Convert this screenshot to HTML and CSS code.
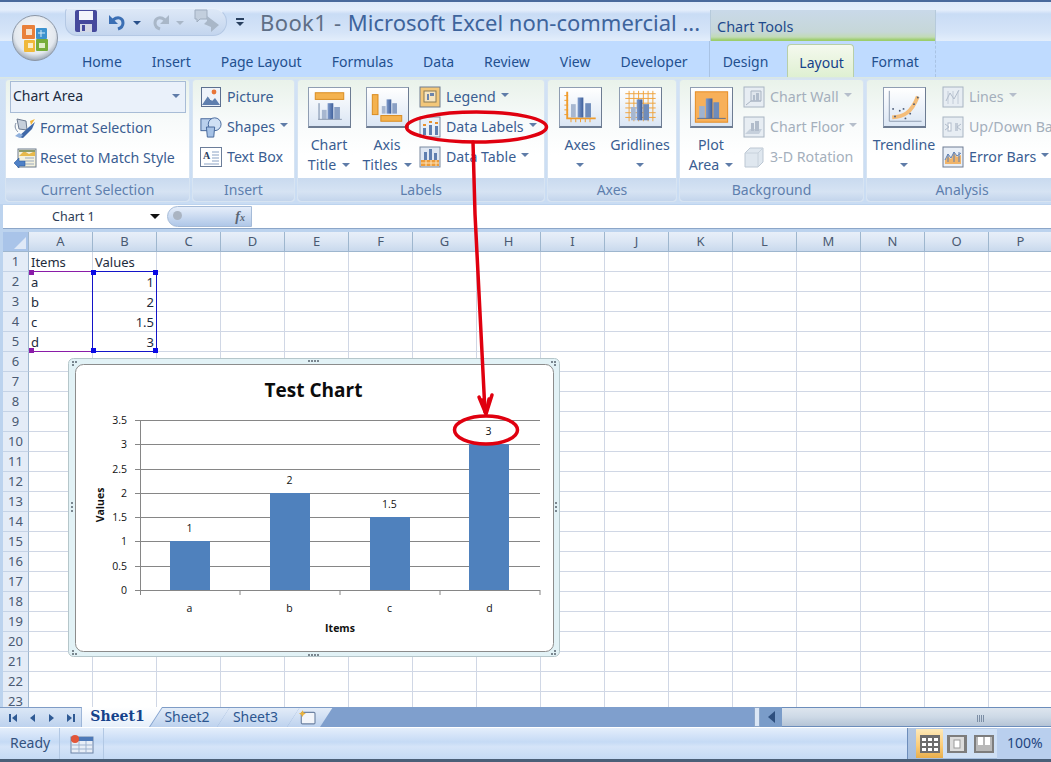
FILE: index.html
```html
<!DOCTYPE html>
<html lang="en">
<head>
<meta charset="utf-8">
<title>Book1 - Microsoft Excel</title>
<link rel="stylesheet" href="styles.css">
</head>
<body>
<svg class="defs" width="0" height="0">
  <defs>
    <linearGradient id="barb" x1="0" x2="1" y1="0" y2="0"><stop offset="0" stop-color="#7f9bcb"/><stop offset="1" stop-color="#3e5f9b"/></linearGradient>
    <symbol id="i-picture" viewBox="0 0 22 22"><rect x="1.5" y="1.5" width="19" height="19" fill="#eef3fa" stroke="#5c6f8f"/><circle cx="14" cy="6" r="2.4" fill="#e8763a"/><path d="M2 19l6-9 4 5 3-3 5 7z" fill="#5f7fae"/><path d="M8 10l3 4" stroke="#fff"/></symbol>
    <symbol id="i-shapes" viewBox="0 0 24 24"><rect x="1" y="3" width="13" height="13" fill="#b9cfec" stroke="#3f6196"/><circle cx="16" cy="9" r="7" fill="#cfe0f5" stroke="#3f6196"/><path d="M7 12h9l-1 11H8z" fill="#a6c2e6" stroke="#3f6196"/></symbol>
    <symbol id="i-textbox" viewBox="0 0 22 22"><rect x="0.5" y="1.5" width="21" height="19" fill="#fff" stroke="#6b7d99"/><path d="M12 6h7M12 9h7M12 12h7M12 15h7M4 18h15" stroke="#8ba2c4"/><text x="3" y="13" class="ic-text">A</text></symbol>
    <symbol id="i-format" viewBox="0 0 24 24"><path d="M4 3l9 2 1 9-8-1z" fill="#c6cfdb" stroke="#6c7a90"/><path d="M3 7c-2 4 0 7 2 9" stroke="#7a8aa2" fill="none"/><path d="M5 21l11-10 6-5-3 7-9 9z" fill="#3f68a8"/><path d="M17 5l5-2-4 6z" fill="#f0b53a"/><path d="M2 20l5 2 3-3-4-2z" fill="#8fb0dc"/></symbol>
    <symbol id="i-reset" viewBox="0 0 24 24"><rect x="5" y="3" width="18" height="18" fill="#f4f1dc" stroke="#6b7a8e"/><path d="M6 10l5-5 5 3 6-3v5z" fill="#e7b94a"/><path d="M6 4h16v2H6z" fill="#8a9a6a"/><path d="M12 12h9M12 15h9M12 18h9" stroke="#99a9c0"/><path d="M1 17l5-5v3h6v5H6v2z" fill="#4f81c7" stroke="#2c5a9a" stroke-width=".6"/></symbol>
    <symbol id="i-legend" viewBox="0 0 22 22"><rect x="1" y="1" width="20" height="20" fill="#f3c779" stroke="#6f7c8f"/><rect x="5" y="5" width="12" height="11" fill="#f7e5bf" stroke="#8a7a55"/><rect x="8" y="8" width="2" height="6" fill="#6c85ad"/><rect x="11" y="7" width="4" height="3" fill="#6c85ad"/></symbol>
    <symbol id="i-dlabels" viewBox="0 0 22 22"><rect x="1" y="1" width="20" height="20" fill="#e9eff7" stroke="#7b8aa0"/><rect x="4" y="12" width="3" height="7" fill="#5f7fb0"/><rect x="10" y="9" width="3" height="10" fill="#5f7fb0"/><rect x="16" y="10" width="3" height="9" fill="#5f7fb0"/><path d="M4 9h3M10 6h3M16 7h3" stroke="#e8912e" stroke-width="2"/></symbol>
    <symbol id="i-dtable" viewBox="0 0 22 22"><rect x="1" y="1" width="20" height="20" fill="#dfe7f2" stroke="#7b8aa0"/><rect x="5" y="6" width="3" height="8" fill="#5f7fb0"/><rect x="10" y="3" width="3" height="11" fill="#5f7fb0"/><rect x="15" y="7" width="3" height="7" fill="#5f7fb0"/><rect x="2" y="14" width="18" height="6" fill="#ed9c3a"/><path d="M2 17h18M7 14v6M12 14v6M17 14v6" stroke="#fbe3bd"/></symbol>
    <symbol id="i-wall" viewBox="0 0 22 22"><rect x="1" y="1" width="20" height="20" fill="#e7edf3" stroke="#a8b4c2"/><path d="M8 5h10v10H8z" fill="#dfe5ec" stroke="#aab5c3"/><path d="M3 19l5-4h10" stroke="#aab5c3" fill="none"/><rect x="10" y="9" width="2" height="6" fill="#b1bccb"/><rect x="13" y="7" width="3" height="8" fill="#b1bccb"/></symbol>
    <symbol id="i-floor" viewBox="0 0 22 22"><rect x="1" y="1" width="20" height="20" fill="#e7edf3" stroke="#a8b4c2"/><path d="M2 18l5-5h12l-3 5z" fill="#c6d0dc"/><rect x="8" y="7" width="3" height="8" fill="#b1bccb"/><rect x="12" y="5" width="4" height="10" fill="#b1bccb"/></symbol>
    <symbol id="i-rot" viewBox="0 0 22 22"><path d="M2 7l5-5h13v14l-5 5H2z" fill="#dfe7ef" stroke="#bcc7d3"/><path d="M2 7h13v14M15 7l5-5" fill="none" stroke="#c8d2dc"/></symbol>
    <symbol id="i-lines" viewBox="0 0 22 22"><rect x="1" y="1" width="20" height="20" fill="#e7edf3" stroke="#a8b4c2"/><path d="M6 5v13M11 5v13M16 5v13" stroke="#c3ccd8"/><path d="M4 15l4-8 4 6 5-9" stroke="#b1bccb" fill="none"/></symbol>
    <symbol id="i-updown" viewBox="0 0 22 22"><rect x="1" y="1" width="20" height="20" fill="#e7edf3" stroke="#a8b4c2"/><rect x="6" y="7" width="3" height="8" fill="#fff" stroke="#b1bccb"/><rect x="13" y="7" width="3" height="8" fill="#c3ccd8"/><path d="M3 8l4 3-4 3M19 8l-4 3 4 3" stroke="#b1bccb" fill="none"/></symbol>
    <symbol id="i-error" viewBox="0 0 22 22"><rect x="1" y="1" width="20" height="20" fill="#e9eff7" stroke="#6e7d93"/><path d="M3 18V14l3-4 3 3 3-6 3 4 4-2v9z" fill="#f0b46a"/><path d="M3 14l3-6 3 4 3-6 3 4 4-3" stroke="#5f7fb0" fill="none"/><path d="M6 8v8M12 6v10M17 6v10" stroke="#5f7fb0"/></symbol>
    <symbol id="big-title" viewBox="0 0 42 40"><rect x="6" y="5" width="30" height="7" fill="#f4b24e" stroke="#d98a1c"/><rect x="9" y="16" width="2" height="17" fill="#aab8cc"/><rect x="13" y="23" width="5" height="10" fill="#a7b7d0"/><rect x="19" y="16" width="6" height="17" fill="url(#barb)"/><rect x="26" y="20" width="6" height="13" fill="#8aa0c4"/><path d="M9 33h25" stroke="#8a98ad"/></symbol>
    <symbol id="big-axis" viewBox="0 0 42 40"><rect x="5" y="7" width="6" height="21" fill="#f4b24e" stroke="#d98a1c"/><rect x="15" y="19" width="4" height="8" fill="#a7b7d0"/><rect x="20" y="12" width="5" height="15" fill="url(#barb)"/><rect x="26" y="16" width="5" height="11" fill="#8aa0c4"/><rect x="14" y="29" width="22" height="6" fill="#f4b24e" stroke="#d98a1c"/></symbol>
    <symbol id="big-axes" viewBox="0 0 42 40"><path d="M7 4v28h30" stroke="#ef9c2c" stroke-width="2" fill="none"/><path d="M4 8h4M4 13h4M4 18h4M4 23h4M4 28h4M11 32v4M16 32v4M21 32v4M26 32v4M31 32v4" stroke="#ef9c2c"/><rect x="11" y="17" width="5" height="14" fill="#a7b7d0"/><rect x="18" y="10" width="6" height="21" fill="url(#barb)"/><rect x="26" y="16" width="6" height="15" fill="#6f8cbb"/></symbol>
    <symbol id="big-grid" viewBox="0 0 42 40"><path d="M5 6h32M5 11h32M5 16h32M5 21h32M5 26h32M5 31h32M9 3v32M14 3v32M19 3v32M24 3v32M29 3v32M34 3v32" stroke="#efa23c"/><rect x="11" y="20" width="5" height="14" fill="#a7b7d0"/><rect x="17" y="12" width="6" height="22" fill="url(#barb)"/><rect x="24" y="17" width="6" height="17" fill="#6f8cbb"/></symbol>
    <symbol id="big-plot" viewBox="0 0 42 40"><rect x="4" y="4" width="34" height="32" fill="#f7b05a" stroke="#e58a1f"/><rect x="8" y="19" width="6" height="13" fill="#9fb2cf"/><rect x="15" y="11" width="7" height="21" fill="url(#barb)"/><rect x="23" y="15" width="6" height="17" fill="#6f8cbb"/><path d="M6 32h30" stroke="#5c6f8f"/></symbol>
    <symbol id="big-trend" viewBox="0 0 42 40"><path d="M5 3v32h34" stroke="#8a98ad" fill="none"/><path d="M8 31c12-1 20-4 27-22" stroke="#f4bd7a" stroke-width="4" fill="none"/><g fill="#4d5c78"><circle cx="9" cy="22" r="1"/><circle cx="11" cy="30" r="1"/><circle cx="16" cy="24" r="1"/><circle cx="20" cy="22" r="1"/><circle cx="22" cy="32" r="1"/><circle cx="27" cy="27" r="1"/><circle cx="31" cy="17" r="1"/><circle cx="35" cy="10" r="1"/></g></symbol>
  </defs>
</svg>

<div class="window">
  <header class="titlebar">
    <div class="qat">
      <svg class="q-save" viewBox="0 0 22 22"><rect width="22" height="22" rx="2" fill="#45499c"/><rect x="4" y="1" width="14" height="9" fill="#f2f4fb"/><rect x="5" y="14" width="12" height="8" fill="#d3d8e6"/><rect x="7" y="15" width="3" height="6" fill="#45499c"/></svg>
      <svg class="q-undo" viewBox="0 0 18 18"><path d="M5 7c5-4 10-2 10 3 0 3-2 5-5 6" fill="none" stroke="#3b6fb4" stroke-width="3"/><path d="M1 2v9h9z" fill="#3b6fb4"/></svg>
      <span class="q-caret"></span>
      <svg class="q-undo q-redo" viewBox="0 0 18 18"><path d="M13 7C8 3 3 5 3 10c0 3 2 5 5 6" fill="none" stroke="#a9b7c8" stroke-width="3"/><path d="M17 2v9H8z" fill="#a9b7c8"/></svg>
      <span class="q-caret q-caret-off"></span>
      <svg class="q-repeat" viewBox="0 0 26 24"><path d="M1 1h12v9H6l-3 3v-3H1z" fill="#c3cfde" stroke="#9fadbf"/><path d="M13 7l12 9-8 7v-5l-7-3 3-3z" fill="#a9b7c8"/></svg>
    </div>
    <div class="customize"><span class="cust-line"></span><span class="q-caret q-caret-dark"></span></div>
    <div class="doc-title"><span class="doc-name">Book1</span><span class="doc-sep"> - </span>Microsoft Excel non-commercial ...</div>
    <div class="context">Chart Tools</div>
  </header>

  <div class="orb" aria-label="Office button">
    <svg viewBox="0 0 46 46" width="46" height="46">
      <defs><radialGradient id="orbg" cx=".5" cy=".4" r=".6"><stop offset="0" stop-color="#fdfdfd"/><stop offset=".75" stop-color="#e3e8ee"/><stop offset="1" stop-color="#9aa6b4"/></radialGradient></defs>
      <circle cx="23" cy="23" r="22.5" fill="url(#orbg)" stroke="#8b96a5"/>
      <rect x="10" y="10" width="13" height="14" rx="1" fill="#e9803a"/><rect x="14" y="14" width="6" height="6" fill="#f6e2cd"/>
      <rect x="24" y="13" width="11" height="11" rx="1" fill="#3d93cf"/><path d="M26 18h7M29 15v7" stroke="#d7ecf8"/>
      <rect x="24" y="24" width="12" height="12" rx="1" fill="#77ad3a"/><rect x="27" y="28" width="6" height="5" fill="#e0edc9"/>
      <rect x="12" y="25" width="11" height="12" rx="1" fill="#f0b93a"/><rect x="16" y="28" width="5" height="5" fill="#fbeec7"/>
    </svg>
  </div>

  <nav class="tabs">
    <span class="tab">Home</span><span class="tab">Insert</span><span class="tab">Page Layout</span><span class="tab">Formulas</span><span class="tab">Data</span><span class="tab">Review</span><span class="tab">View</span><span class="tab">Developer</span>
    <span class="tab tab-design">Design</span><span class="tab tab-active">Layout</span><span class="tab tab-format">Format</span>
  </nav>

  <section class="ribbon">
    <div class="group g-current">
      <div class="tools tools-col">
        <div class="combo"><span>Chart Area</span><span class="caret"></span></div>
        <div class="small"><svg class="ic24"><use href="#i-format"/></svg>Format Selection</div>
        <div class="small"><svg class="ic24"><use href="#i-reset"/></svg>Reset to Match Style</div>
      </div>
      <div class="glabel">Current Selection</div>
    </div>
    <div class="group g-insert">
      <div class="tools tools-col">
        <div class="small"><svg class="ic22"><use href="#i-picture"/></svg>Picture</div>
        <div class="small"><svg class="ic22"><use href="#i-shapes"/></svg>Shapes<span class="caret"></span></div>
        <div class="small"><svg class="ic22"><use href="#i-textbox"/></svg>Text Box</div>
      </div>
      <div class="glabel">Insert</div>
    </div>
    <div class="group g-labels">
      <div class="tools">
        <div class="big"><div class="bigbox"><svg><use href="#big-title"/></svg></div><div class="biglabel">Chart<br>Title<span class="caret"></span></div></div>
        <div class="big"><div class="bigbox"><svg><use href="#big-axis"/></svg></div><div class="biglabel">Axis<br>Titles<span class="caret"></span></div></div>
        <div class="smalls">
          <div class="small"><svg class="ic22"><use href="#i-legend"/></svg>Legend<span class="caret"></span></div>
          <div class="small"><svg class="ic22"><use href="#i-dlabels"/></svg>Data Labels<span class="caret"></span></div>
          <div class="small"><svg class="ic22"><use href="#i-dtable"/></svg>Data Table<span class="caret"></span></div>
        </div>
      </div>
      <div class="glabel">Labels</div>
    </div>
    <div class="group g-axes">
      <div class="tools">
        <div class="big big-60"><div class="bigbox"><svg><use href="#big-axes"/></svg></div><div class="biglabel">Axes<br><span class="caret caret-solo"></span></div></div>
        <div class="big big-60"><div class="bigbox"><svg><use href="#big-grid"/></svg></div><div class="biglabel">Gridlines<br><span class="caret caret-solo"></span></div></div>
      </div>
      <div class="glabel">Axes</div>
    </div>
    <div class="group g-bg">
      <div class="tools">
        <div class="big"><div class="bigbox"><svg><use href="#big-plot"/></svg></div><div class="biglabel">Plot<br>Area<span class="caret"></span></div></div>
        <div class="smalls">
          <div class="small off"><svg class="ic22"><use href="#i-wall"/></svg>Chart Wall<span class="caret"></span></div>
          <div class="small off"><svg class="ic22"><use href="#i-floor"/></svg>Chart Floor<span class="caret"></span></div>
          <div class="small off"><svg class="ic22"><use href="#i-rot"/></svg>3-D Rotation</div>
        </div>
      </div>
      <div class="glabel">Background</div>
    </div>
    <div class="group g-analysis">
      <div class="tools">
        <div class="big big-70"><div class="bigbox"><svg><use href="#big-trend"/></svg></div><div class="biglabel">Trendline<br><span class="caret caret-solo"></span></div></div>
        <div class="smalls">
          <div class="small off"><svg class="ic22"><use href="#i-lines"/></svg>Lines<span class="caret"></span></div>
          <div class="small off"><svg class="ic22"><use href="#i-updown"/></svg>Up/Down Bars<span class="caret"></span></div>
          <div class="small"><svg class="ic22"><use href="#i-error"/></svg>Error Bars<span class="caret"></span></div>
        </div>
      </div>
      <div class="glabel">Analysis</div>
    </div>
  </section>

  <div class="formula">
    <div class="namebox"><span>Chart 1</span><span class="caret-black"></span></div>
    <div class="fx-pill"><span class="fx-dot"></span><span class="fx">f<sub>x</sub></span></div>
    <div class="fx-input"></div>
  </div>

  <main class="sheet">
    <div class="row row-head">
      <div class="corner"><span class="corner-tri"></span></div>
      <div class="ch">A</div><div class="ch">B</div><div class="ch">C</div><div class="ch">D</div><div class="ch">E</div><div class="ch">F</div><div class="ch">G</div><div class="ch">H</div><div class="ch">I</div><div class="ch">J</div><div class="ch">K</div><div class="ch">L</div><div class="ch">M</div><div class="ch">N</div><div class="ch">O</div><div class="ch">P</div>
    </div>
    <div class="row"><div class="rh">1</div><div class="cell">Items</div><div class="cell">Values</div></div>
    <div class="row"><div class="rh">2</div><div class="cell">a</div><div class="cell num">1</div></div>
    <div class="row"><div class="rh">3</div><div class="cell">b</div><div class="cell num">2</div></div>
    <div class="row"><div class="rh">4</div><div class="cell">c</div><div class="cell num">1.5</div></div>
    <div class="row"><div class="rh">5</div><div class="cell">d</div><div class="cell num">3</div></div>
    <div class="row"><div class="rh">6</div></div>
    <div class="row"><div class="rh">7</div></div>
    <div class="row"><div class="rh">8</div></div>
    <div class="row"><div class="rh">9</div></div>
    <div class="row"><div class="rh">10</div></div>
    <div class="row"><div class="rh">11</div></div>
    <div class="row"><div class="rh">12</div></div>
    <div class="row"><div class="rh">13</div></div>
    <div class="row"><div class="rh">14</div></div>
    <div class="row"><div class="rh">15</div></div>
    <div class="row"><div class="rh">16</div></div>
    <div class="row"><div class="rh">17</div></div>
    <div class="row"><div class="rh">18</div></div>
    <div class="row"><div class="rh">19</div></div>
    <div class="row"><div class="rh">20</div></div>
    <div class="row"><div class="rh">21</div></div>
    <div class="row"><div class="rh">22</div></div>
    <div class="row"><div class="rh">23</div></div>
  </main>

  <div class="sheetbar">
    <div class="nav">
      <svg class="navicon" viewBox="0 0 10 10"><path d="M1 1h2v8H1zM9 1v8L4 5z" fill="#2f5a94"/></svg>
      <svg class="navicon" viewBox="0 0 10 10"><path d="M8 1v8L3 5z" fill="#2f5a94"/></svg>
      <svg class="navicon" viewBox="0 0 10 10"><path d="M2 1v8l5-4z" fill="#2f5a94"/></svg>
      <svg class="navicon" viewBox="0 0 10 10"><path d="M9 1H7v8h2zM1 1v8l5-4z" fill="#2f5a94"/></svg>
    </div>
    <div class="stab stab-active">Sheet1</div>
    <div class="stab stab-2">Sheet2</div>
    <div class="stab stab-3">Sheet3</div>
    <div class="stab stab-new"><svg viewBox="0 0 16 14" width="20" height="16"><rect x="3" y="3" width="12" height="10" rx="1" fill="#f2f5fa" stroke="#6e83a3"/><path d="M4 1l1 2 2 1-2 1-1 2-1-2-2-1 2-1z" fill="#e9b23c"/></svg></div>
    <div class="bar-fill"></div>
    <div class="split"></div>
    <div class="sb-left"><span class="sb-tri"></span></div>
    <div class="sb-track"><span class="sb-grip"></span></div>
  </div>

  <footer class="status">
    <div class="ready">Ready</div>
    <div class="macro"><svg viewBox="0 0 24 20" width="24" height="20"><rect x="1" y="3" width="22" height="16" fill="#e8eef7" stroke="#6d83a6"/><rect x="1" y="3" width="22" height="4" fill="#4d79b8"/><path d="M9 7v12M16 7v12M1 11h22M1 15h22" stroke="#9fb3cf"/><circle cx="5" cy="5" r="4" fill="#e2563a"/></svg></div>
    <div class="status-fill"></div>
    <div class="views">
      <div class="view view-on"><svg viewBox="0 0 20 18" width="20" height="18"><rect width="20" height="18" fill="#6c6c6c"/><path d="M2 3h4v3H2zM8 3h4v3H8zM14 3h4v3h-4zM2 8h4v3H2zM8 8h4v3H8zM14 8h4v3h-4zM2 13h4v3H2zM8 13h4v3H8zM14 13h4v3h-4z" fill="#fff"/></svg></div>
      <div class="view"><svg viewBox="0 0 20 18" width="20" height="18"><rect width="20" height="18" fill="#7d7d7d"/><rect x="3" y="2" width="14" height="14" fill="#dcdcdc"/><rect x="7" y="5" width="6" height="8" fill="#fff" stroke="#999"/></svg></div>
      <div class="view"><svg viewBox="0 0 20 18" width="20" height="18"><rect width="20" height="18" fill="#7d7d7d"/><rect x="2" y="2" width="16" height="14" fill="#b9b9b9"/><rect x="4" y="2" width="5" height="8" fill="#fff"/><rect x="11" y="2" width="5" height="8" fill="#fff"/></svg></div>
    </div>
    <div class="zoom">100%</div>
  </footer>
  <div class="edge"></div>

  <div class="ctx-guides"></div>
  <div class="sel sel-a"></div>
  <div class="sel sel-b"></div>
  <span class="hd hd-p hd-1"></span><span class="hd hd-p hd-2"></span>
  <span class="hd hd-b hd-3"></span><span class="hd hd-b hd-4"></span><span class="hd hd-b hd-5"></span><span class="hd hd-b hd-6"></span>

  <svg class="chart" viewBox="68 357 492 301" width="492" height="301">
    <rect x="68.500" y="358.500" width="491" height="298" rx="5" fill="#e2f2f6" stroke="#b5c6ca"/>
    <rect x="75.500" y="364.500" width="478" height="287" rx="8" fill="#fff" stroke="#8c8c8c"/>
    <g fill="#7a8790">
      <path d="M72 361h2v2h-2zM75 361h2v2h-2zM72 364h2v2h-2zM551 361h2v2h-2zM554 361h2v2h-2zM554 364h2v2h-2zM72 650h2v2h-2zM72 653h2v2h-2zM75 653h2v2h-2zM554 650h2v2h-2zM551 653h2v2h-2zM554 653h2v2h-2z"/>
      <path d="M308 360h2v2h-2zM311 360h2v2h-2zM314 360h2v2h-2zM317 360h2v2h-2zM308 654h2v2h-2zM311 654h2v2h-2zM314 654h2v2h-2zM317 654h2v2h-2zM71 502h2v2h-2zM71 506h2v2h-2zM71 510h2v2h-2zM555 502h2v2h-2zM555 506h2v2h-2zM555 510h2v2h-2z"/>
    </g>
    <g stroke="#868686" fill="none">
      <path d="M135 420.500h405M135 444.500h405M135 469.500h405M135 493.500h405M135 517.500h405M135 541.500h405M135 566.500h405M135 590.500h405"/>
      <path d="M140.500 420v175M240 590v5M340 590v5M440 590v5M540 590v5"/>
    </g>
    <g fill="#4f81bd">
      <rect x="170" y="541" width="40" height="49"/>
      <rect x="270" y="493" width="40" height="97"/>
      <rect x="370" y="517" width="40" height="73"/>
      <rect x="469" y="444" width="40" height="146"/>
    </g>
    <text class="c-title" x="313.500" y="397" text-anchor="middle">Test Chart</text>
    <g class="c-text" text-anchor="end">
      <text x="127" y="424">3.5</text><text x="127" y="448">3</text><text x="127" y="473">2.5</text><text x="127" y="497">2</text><text x="127" y="521">1.5</text><text x="127" y="545">1</text><text x="127" y="570">0.5</text><text x="127" y="594">0</text>
    </g>
    <g class="c-text" text-anchor="middle">
      <text x="189.500" y="532">1</text><text x="289.500" y="484">2</text><text x="389.500" y="508">1.5</text><text x="488.500" y="435">3</text>
      <text x="189.500" y="612">a</text><text x="289.500" y="612">b</text><text x="389.500" y="612">c</text><text x="489.500" y="612">d</text>
    </g>
    <text class="c-axis" x="340" y="632" text-anchor="middle">Items</text>
    <text class="c-axis" transform="translate(104 505) rotate(-90)" text-anchor="middle">Values</text>
  </svg>

  <svg class="marks" viewBox="0 0 1051 762" width="1051" height="762">
    <g fill="none" stroke="#e0000f" stroke-width="3.500" stroke-linecap="round" stroke-linejoin="round">
      <ellipse cx="476.500" cy="127" rx="70" ry="15"/>
      <path d="M473 142l2 72 10 198"/>
      <path d="M479 397l7 17 6-19"/>
      <path d="M482 400l4 13 3-14"/>
      <ellipse cx="486" cy="430" rx="31.500" ry="14"/>
    </g>
  </svg>
</div>
</body>
</html>
```

FILE: styles.css
```css
* { box-sizing: border-box; }
html, body { margin: 0; padding: 0; }
body { width: 1051px; height: 762px; overflow: hidden; background: #bcd3ee; font-family: "Noto Sans", "Open Sans", sans-serif; color: #15428b; }
.defs { position: absolute; }
.ic-text { font: bold 10px "Liberation Serif", serif; fill: #2c3e5c; }
.window { position: relative; width: 1051px; height: 762px; display: flex; flex-direction: column; overflow: hidden; }

/* title bar */
.titlebar { height: 41px; flex: none; display: flex; align-items: flex-start; padding-left: 65px; border-top: 2px solid #4a6a9c; background: linear-gradient(#dfeafa 0, #e4eefb 8px, #c9dcf5 12px, #d5e4f8 30px, #e3eefb 39px, #a9c8ee 40px); white-space: nowrap; }
.qat { width: 162px; flex: none; height: 28px; margin-top: 6px; display: flex; align-items: center; padding-left: 9px; border-radius: 4px 14px 14px 12px; background: linear-gradient(#dde8f7, #c3d5ee); border: 1px solid #b4c8e4; border-top-color: #e7effa; }
.q-save { width: 22px; height: 22px; margin-top: -2px; margin-right: 11px; flex: none; }
.q-undo { width: 18px; height: 18px; flex: none; }
.q-redo { margin-left: 4px; }
.q-repeat { width: 26px; height: 24px; margin-left: 4px; margin-top: -3px; flex: none; }
.q-caret { width: 0; height: 0; margin: 2px 7px 0 7px; border: 4px solid transparent; border-top: 4px solid #29508a; border-bottom: 0; flex: none; }
.q-caret-off { border-top-color: #a9b7c8; margin: 2px 6px 0 6px; }
.customize { width: 26px; flex: none; height: 28px; margin-top: 6px; display: flex; flex-direction: column; align-items: center; justify-content: center; gap: 2px; }
.cust-line { width: 8px; height: 2px; background: #29405f; }
.q-caret-dark { margin: 0; border-top-color: #29405f; }
.doc-title { width: 450px; flex: none; margin-left: 7px; height: 39px; line-height: 41px; font-size: 22px; color: #3e649c; overflow: hidden; }
.doc-name { color: #5f6f86; letter-spacing: .4px; }
.doc-sep { color: #5f6f86; padding: 0 1px; }
.context { width: 226px; flex: none; height: 31px; margin-top: 8px; padding: 6px 0 0 6px; line-height: 20px; font-size: 14.500px; color: #1f4a8c; background: linear-gradient(#c9d9e9 0, #c6d7d8 22px, #c2dbb6 27px, #9ccd6b 30px); border-left: 1px solid #b6cadb; border-right: 1px solid #b6cadb; }
.ctx-guides { position: absolute; left: 709px; top: 41px; width: 227px; height: 36px; border-left: 1px solid #a9c3e4; border-right: 1px dashed #a9c3e4; }

/* office orb */
.orb { position: absolute; left: 12px; top: 15px; width: 46px; height: 46px; }

/* tabs */
.tabs { height: 36px; flex: none; display: flex; align-items: flex-end; padding-left: 67px; background: #bfdbff; white-space: nowrap; font-size: 14px; color: #23508f; }
.tab { height: 33px; padding: 8px 15px 0; line-height: 20px; }
.tab-design { margin-left: 5px; }
.tab-active { width: 67px; margin-left: 4px; padding: 8px 0 0 11px; border: 1px solid #b8cfa8; border-bottom: 0; border-radius: 4px 4px 0 0; background: linear-gradient(#f4f9ee, #dff0d2); color: #15428b; }
.tab-format { margin-left: 2px; }

/* ribbon */
.ribbon { height: 127px; flex: none; display: flex; gap: 4px; padding: 3px 0 3px 6px; background: linear-gradient(#dbe8e2 0, #d2e2f5 3px, #c9dcf3 100%); overflow: hidden; }
.group { height: 121px; flex: none; display: flex; flex-direction: column; border-radius: 3px; background: linear-gradient(#e9f2ea 0, #f7fafa 40px, #fff 75px); box-shadow: 0 0 0 1px #d7e4f2; white-space: nowrap; }
.g-current { width: 183px; }
.g-insert { width: 101px; }
.g-labels { width: 246px; }
.g-axes { width: 128px; }
.g-bg { width: 183px; }
.g-analysis { width: 190px; }
.tools { height: 98px; flex: none; display: flex; padding: 2px 0 0 2px; font-size: 14.200px; line-height: 20px; color: #3a5d92; }
.tools-col { flex-direction: column; padding-left: 7px; }
.g-insert .tools-col { padding-left: 5px; }
.glabel { flex: 1; text-align: center; font-size: 14px; line-height: 23px; color: #5e7fae; background: linear-gradient(#c9daef, #d6e3f3 60%, #c3d5ec); border-radius: 0 0 3px 3px; }
.combo { width: 176px; height: 32px; margin: -1px 0 0 -3px; padding: 0 5px 3px 2px; display: flex; justify-content: space-between; align-items: center; background: #eaf1fa; border: 1px solid #a8bcd6; font-size: 14px; color: #1c2b40; flex: none; }
.small { height: 30px; display: flex; align-items: center; gap: 5px; padding-left: 2px; }
.g-current .small { padding-left: 0; gap: 3px; }
.ic22 { width: 22px; height: 22px; flex: none; }
.ic24 { width: 24px; height: 24px; flex: none; }
.off { color: #a4afbc; }
.off .caret { border-top-color: #b5becb; }
.caret { display: inline-block; width: 0; height: 0; margin-left: 6px; margin-bottom: 3px; border: 4px solid transparent; border-top: 4px solid #5f7ca8; border-bottom: 0; vertical-align: middle; }
.small .caret { margin-left: 0; margin-bottom: 4px; }
.combo .caret { margin: 0; }
.caret-solo { margin-left: 0; }
.big { width: 58px; flex: none; display: flex; flex-direction: column; align-items: center; text-align: center; }
.big-60 { width: 60px; }
.big-70 { width: 70px; }
.bigbox { width: 43px; height: 41px; margin-top: 5px; border: 1px solid #8f9db2; border-right-color: #6d7c92; border-bottom: 2px solid #6d7c92; background: linear-gradient(#ffffff, #dbe6f4); }
.bigbox svg { display: block; width: 41px; height: 38px; }
.biglabel { margin-top: 7px; }
.smalls { display: flex; flex-direction: column; margin-left: 1px; }

/* formula bar */
.formula { height: 24px; flex: none; margin-top: 1px; margin-left: 3px; display: flex; background: #fff; border-bottom: 1px solid #8ca6c8; }
.namebox { width: 164px; display: flex; align-items: center; padding: 0 7px 0 49px; justify-content: space-between; font-size: 12.500px; color: #2c3c54; }
.caret-black { width: 0; height: 0; border: 5px solid transparent; border-top: 5px solid #111; border-bottom: 0; }
.fx-pill { position: relative; width: 85px; height: 21px; margin-top: 1px; border: 1px solid #a5bbd8; border-radius: 11px 0 0 11px; background: linear-gradient(#e6eefa, #afc7e8); display: flex; align-items: center; justify-content: flex-end; padding-right: 6px; }
.fx-dot { position: absolute; left: 5px; top: 4px; width: 9px; height: 9px; border-radius: 50%; background: #aab4c2; }
.fx { font: italic bold 14px "Liberation Serif", serif; color: #5b6675; }
.fx sub { font-size: 10px; vertical-align: baseline; }
.fx-input { flex: 1; }

/* sheet */
.sheet { height: 475px; flex: none; margin-top: 3px; margin-left: 3px; background: #fff; overflow: hidden; }
.row { height: 20px; display: flex; background: repeating-linear-gradient(90deg, transparent 0 63px, #d0d7e5 63px 64px) 26px 0 / 100% 100% no-repeat, linear-gradient(transparent 19px, #d0d7e5 19px); font-size: 13px; color: #1d2b3c; }
.row-head { background: none; }
.corner { position: relative; width: 26px; flex: none; background: #a9c4e9; border-right: 1px solid #9eb6ce; border-bottom: 1px solid #9eb6ce; }
.corner-tri { position: absolute; right: 2px; bottom: 2px; width: 0; height: 0; border-left: 12px solid transparent; border-bottom: 12px solid #dfe9f7; }
.ch { width: 64px; flex: none; text-align: center; line-height: 19px; font-size: 13px; color: #4a5a72; background: linear-gradient(#e8eff9, #dbe6f4 50%, #c9d9ed); border-right: 1px solid #9eb6ce; border-bottom: 1px solid #9eb6ce; }
.rh { width: 26px; flex: none; text-align: center; line-height: 19px; font-size: 13px; color: #4a5a72; background: #e4ecf7; border-right: 1px solid #9eb6ce; border-bottom: 1px solid #c5d3e6; }
.cell { width: 64px; flex: none; padding: 0 2px; line-height: 20px; }
.num { text-align: right; }
.cell.num { padding-right: 3px; }

/* sheet tabs */
.sheetbar { height: 20px; flex: none; display: flex; align-items: stretch; background: #7f9fcd; white-space: nowrap; }
.nav { width: 82px; flex: none; padding: 0 5px 0 8px; display: flex; align-items: center; justify-content: space-between; background: linear-gradient(#dbe7f6, #bdd2ee); border-top: 1px solid #7f9cc6; border-right: 1px solid #9db6d8; }
.navicon { width: 10px; height: 10px; }
.stab { flex: none; text-align: center; line-height: 18px; font-size: 14px; color: #2c5690; background: linear-gradient(#e3ecf8, #bdd2ee); border-top: 1px solid #7f9cc6; clip-path: polygon(13px 0, 100% 0, calc(100% - 13px) 100%, 0 100%); }
.stab-active { width: 80px; padding-right: 9px; font: bold 14px/18px "DejaVu Serif", serif; color: #15428b; background: linear-gradient(#fff, #e6effa); border-top: 0; clip-path: polygon(0 0, 100% 0, calc(100% - 13px) 100%, 0 100%); }
.stab-2 { width: 80px; margin-left: -12px; padding-right: 6px; }
.stab-3 { width: 83px; margin-left: -13px; padding-right: 6px; }
.stab-new { width: 46px; margin-left: -13px; padding: 1px 6px 0 0; }
.bar-fill { flex: 1; }
.split { width: 6px; flex: none; background: #dbe7f6; border: 1px solid #8da6c8; }
.sb-left { width: 22px; flex: none; display: flex; align-items: center; justify-content: center; background: #7a9cc9; }
.sb-tri { width: 0; height: 0; border: 6px solid transparent; border-right: 7px solid #2e4f7e; border-left: 0; }
.sb-track { position: relative; width: 269px; flex: none; background: linear-gradient(#dde5ee, #cdd9e6 50%, #b5c4d6); border-top: 1px solid #6c8dbb; border-bottom: 1px solid #6c8dbb; }
.sb-grip { position: absolute; left: 195px; top: 7px; width: 8px; height: 7px; background: repeating-linear-gradient(90deg, #7c8ea5 0 1px, transparent 1px 2px); }

/* status bar */
.status { height: 32px; flex: none; display: flex; align-items: stretch; background: linear-gradient(#e4eefb 0, #c5daf5 45%, #d5e4f8 60%, #c5daf5 100%); border-top: 1px solid #fff; font-size: 14px; color: #34527f; }
.ready { width: 60px; padding-left: 10px; line-height: 29px; border-right: 1px solid #b2c8e4; }
.macro { width: 44px; display: flex; align-items: center; justify-content: center; border-right: 1px solid #b2c8e4; }
.status-fill { flex: 1; }
.views { width: 90px; display: flex; align-items: center; padding-left: 8px; background: linear-gradient(#b3c7e2, #a5bedf); border-left: 1px solid #6d8dbb; }
.view { width: 27px; height: 29px; display: flex; align-items: center; justify-content: center; background: #cfe0f5; }
.view-on { background: linear-gradient(#fde9b9, #fbcb75 60%, #e7ae4c); }
.zoom { width: 54px; padding-left: 10px; line-height: 30px; font-size: 14px; color: #23457f; background: #b9cfee; }
.edge { flex: 1; background: #4b5f78; }

/* selection overlays */
.sel { position: absolute; }
.sel-a { left: 29px; top: 271px; width: 64px; height: 81px; border-top: 1px solid #8a1ca8; border-bottom: 1px solid #8a1ca8; }
.sel-b { left: 92px; top: 271px; width: 65px; height: 81px; border: 1px solid #1414c8; }
.hd { position: absolute; width: 5px; height: 5px; }
.hd-p { background: #8a1ca8; }
.hd-b { background: #0a0ae6; }
.hd-1 { left: 29px; top: 270px; }
.hd-2 { left: 29px; top: 348px; }
.hd-3 { left: 91px; top: 270px; }
.hd-4 { left: 153px; top: 270px; }
.hd-5 { left: 91px; top: 348px; }
.hd-6 { left: 153px; top: 348px; }

/* chart */
.chart { position: absolute; left: 68px; top: 357px; }
.c-title { font: bold 19px "Open Sans", sans-serif; fill: #0c0c0c; }
.c-text text { font: 10.500px "Open Sans", sans-serif; fill: #111; }
.c-axis { font: bold 10.500px "Open Sans", sans-serif; fill: #111; }

/* annotation */
.marks { position: absolute; left: 0; top: 0; pointer-events: none; }
```
